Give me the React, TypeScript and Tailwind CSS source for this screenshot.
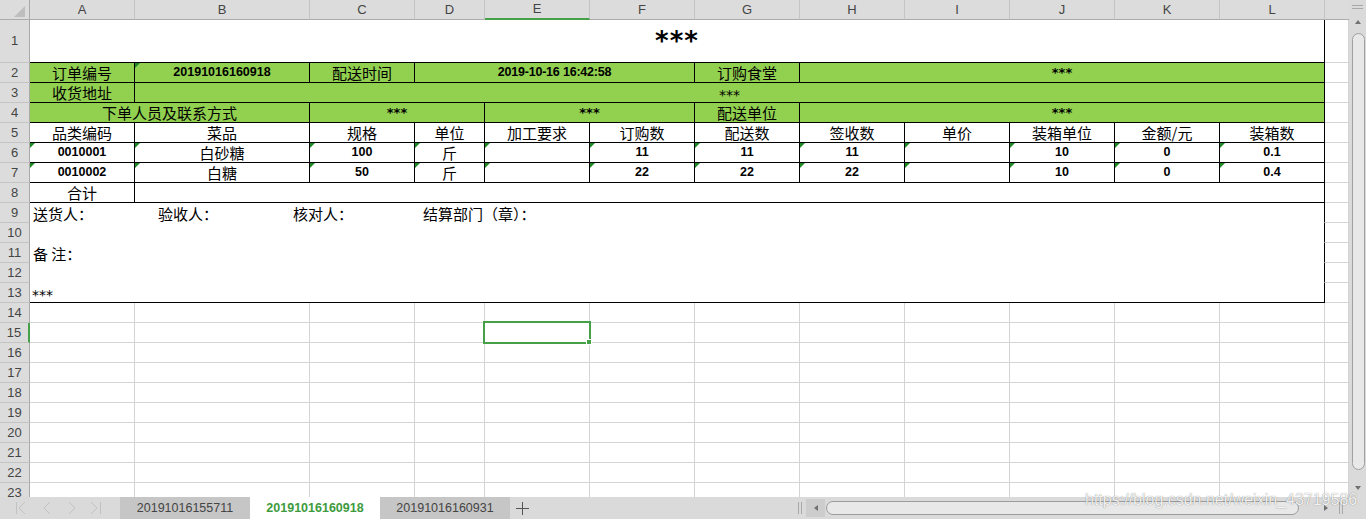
import React from 'react';

const COLS = ['A', 'B', 'C', 'D', 'E', 'F', 'G', 'H', 'I', 'J', 'K', 'L'];

const SPAN: Record<number, string> = {
  1: 'col-span-1',
  2: 'col-span-2',
  3: 'col-span-3',
  5: 'col-span-5',
  11: 'col-span-11',
  12: 'col-span-12',
};

const CJK = "font-['Noto_Sans_CJK_SC',sans-serif] text-[15px]";
const NUM = "font-['Liberation_Sans',Arial,sans-serif] font-bold text-[12.5px]";
const DATE = "font-['Liberation_Sans',Arial,sans-serif] font-bold text-[12.5px] tracking-[-0.2px]";
const STAR = "font-['DejaVu_Sans',sans-serif] font-bold text-[13px]";
const STAR_THIN = "font-['DejaVu_Sans',sans-serif] text-[14px] pt-[6px]";
const HEAD = "bg-[#dcdcdc] text-[#444] font-['Liberation_Sans',Arial,sans-serif] text-[13px] flex items-center justify-center";

type Cell = { t?: string; span?: number; f?: string; tri?: boolean };

const isNum = (s: string) => /^[\d.]+$/.test(s);
const auto = (t: string, tri = false): Cell => ({ t, f: isNum(t) ? NUM : CJK, tri });

const tableRows: { n: number; green: boolean; cells: Cell[] }[] = [
  {
    n: 2,
    green: true,
    cells: [
      { t: '订单编号' },
      { t: '20191016160918', f: NUM, tri: true },
      { t: '配送时间' },
      { t: '2019-10-16 16:42:58', f: DATE, span: 3 },
      { t: '订购食堂' },
      { t: '***', f: STAR, span: 5 },
    ],
  },
  {
    n: 3,
    green: true,
    cells: [{ t: '收货地址' }, { t: '***', f: STAR_THIN, span: 11 }],
  },
  {
    n: 4,
    green: true,
    cells: [
      { t: '下单人员及联系方式', span: 2 },
      { t: '***', f: STAR, span: 2 },
      { t: '***', f: STAR, span: 2 },
      { t: '配送单位' },
      { t: '***', f: STAR, span: 5 },
    ],
  },
  {
    n: 5,
    green: false,
    cells: ['品类编码', '菜品', '规格', '单位', '加工要求', '订购数', '配送数', '签收数', '单价', '装箱单位', '金额/元', '装箱数'].map((t) => auto(t)),
  },
  {
    n: 6,
    green: false,
    cells: ['0010001', '白砂糖', '100', '斤', '', '11', '11', '11', '', '10', '0', '0.1'].map((t) => auto(t, true)),
  },
  {
    n: 7,
    green: false,
    cells: ['0010002', '白糖', '50', '斤', '', '22', '22', '22', '', '10', '0', '0.4'].map((t) => auto(t, true)),
  },
  {
    n: 8,
    green: false,
    cells: [{ t: '合计' }, { span: 11 }],
  },
];

const Tri = () => (
  <span className="absolute left-0 top-0 w-0 h-0 border-t-[5px] border-r-[5px] border-t-[#1f8a24] border-r-transparent" />
);

const RowHead = ({ n }: { n: number }) =>
  n === 15 ? (
    <div className={`${HEAD} bg-[#c8c8c8] text-[#3d9b3d] border-b border-b-[#c4c4c4] border-r-2 border-r-[#45a047]`}>{n}</div>
  ) : (
    <div className={`${HEAD} border-b border-b-[#c4c4c4] border-r border-r-[#a9a9a9]`}>{n}</div>
  );

const Grid = () => <div className="border-r border-b border-[#d4d4d4] bg-white" />;

const Sheet = () => {
  const emptyRows = Array.from({ length: 10 }, (_, i) => i + 14);
  return (
    <div className="flex-1 overflow-hidden grid grid-cols-[30px_105px_175px_105px_70px_105px_105px_105px_105px_105px_105px_105px_105px_1fr] grid-rows-[20px_43px] auto-rows-[20px]">
      {/* column headers */}
      <div className={`${HEAD} border-r border-b border-r-[#a9a9a9] border-b-[#ababab] relative`}>
        <svg width="12" height="12" className="absolute left-[14px] top-[6px]">
          <polygon points="11,0 11,11 0,11" fill="#bdbdbd" />
        </svg>
      </div>
      {COLS.map((c) =>
        c === 'E' ? (
          <div key={c} className={`${HEAD} bg-[#c8c8c8] text-[#3d9b3d] border-r border-r-[#c4c4c4] border-b-2 border-b-[#45a047]`}>
            {c}
          </div>
        ) : (
          <div key={c} className={`${HEAD} border-r border-r-[#c4c4c4] border-b border-b-[#ababab]`}>
            {c}
          </div>
        )
      )}
      <div className={`${HEAD} border-b border-b-[#ababab]`} />

      {/* row 1 title */}
      <RowHead n={1} />
      <div className="col-span-12 bg-white border-r border-b border-black flex items-center justify-center leading-[42px] font-['DejaVu_Sans',sans-serif] font-bold text-[26px] tracking-[1px]">
        ***
      </div>
      <Grid />

      {tableRows.map((row) => (
        <React.Fragment key={row.n}>
          <RowHead n={row.n} />
          {row.cells.map((c, i) => (
            <div
              key={i}
              className={`${SPAN[c.span ?? 1]} relative h-full flex items-center justify-center leading-[19px] text-black border-r border-b border-black ${
                row.green ? 'bg-[#92d050]' : 'bg-white'
              } ${c.f ?? CJK}`}
            >
              {c.tri && <Tri />}
              {c.t}
            </div>
          ))}
          <Grid />
        </React.Fragment>
      ))}

      {/* rows 9 - 13 signature block */}
      <RowHead n={9} />
      <div className={`col-span-12 bg-white border-r border-black border-b border-b-white flex items-center pl-[3px] pt-[2px] leading-[18px] text-black ${CJK} text-[14px]`}>
        <span className="w-[125px]">送货人：</span>
        <span className="w-[135px]">验收人：</span>
        <span className="w-[130px]">核对人：</span>
        <span>结算部门（章）：</span>
      </div>
      <Grid />
      <RowHead n={10} />
      <div className="col-span-12 bg-white border-r border-black border-b border-b-white" />
      <Grid />
      <RowHead n={11} />
      <div className={`col-span-12 bg-white border-r border-black border-b border-b-white flex items-center pl-[3px] pt-[2px] leading-[18px] text-black ${CJK} text-[14px]`}>
        备 注：
      </div>
      <Grid />
      <RowHead n={12} />
      <div className="col-span-12 bg-white border-r border-black border-b border-b-white" />
      <Grid />
      <RowHead n={13} />
      <div className="col-span-12 bg-white border-r border-b border-black flex items-center pl-[2px] pt-[4px] leading-[18px] text-black font-['DejaVu_Sans',sans-serif] text-[14px]">
        ***
      </div>
      <Grid />

      {emptyRows.map((n) => (
        <React.Fragment key={n}>
          <RowHead n={n} />
          {COLS.map((c) =>
            n === 15 && c === 'E' ? (
              <div key={c} className="relative border-r border-b border-[#d4d4d4] bg-white">
                <div className="absolute -left-[2px] -top-[2px] w-[108px] h-[23px] border-[2.5px] border-[#45a047]" />
                <div className="absolute left-[101px] top-[16px] w-[6px] h-[6px] bg-[#45a047] border border-white" />
              </div>
            ) : (
              <Grid key={c} />
            )
          )}
          <Grid />
        </React.Fragment>
      ))}
    </div>
  );
};

const VScroll = () => (
  <div className="w-[17px] h-[497px] bg-[#dadada] flex flex-col">
    <div className="h-[12px] flex flex-col items-center justify-center gap-[2px] pt-[1px]">
      <div className="w-[11px] h-px bg-[#a8a8a8]" />
      <div className="w-[11px] h-px bg-[#a8a8a8]" />
    </div>
    <div className="h-[20px] flex items-center justify-center">
      <div className="w-0 h-0 border-x-[3px] border-x-transparent border-b-[4px] border-b-[#707070]" />
    </div>
    <div className="mt-[1px] h-[437px] pl-[3px] pr-[1px]">
      <div className="w-full h-full rounded-full border border-[#a0a0a0] bg-[#e8e8e8]" />
    </div>
    <div className="flex-1" />
    <div className="h-[19px] flex items-center justify-center">
      <div className="w-0 h-0 border-x-[3px] border-x-transparent border-t-[4px] border-t-[#707070]" />
    </div>
  </div>
);

const TabBar = () => (
  <div className="h-[22px] flex bg-[#dadada] font-['Liberation_Sans',Arial,sans-serif] text-[12.5px]">
    <svg width="120" height="22" className="shrink-0">
      <g stroke="#c2c2c2" strokeWidth="1" fill="none">
        <line x1="16.5" y1="5" x2="16.5" y2="17" />
        <polyline points="25,5 19,11 25,17" />
        <polyline points="50,5 44,11 50,17" />
        <polyline points="69,5 75,11 69,17" />
        <polyline points="91,5 97,11 91,17" />
        <line x1="100.5" y1="5" x2="100.5" y2="17" />
      </g>
    </svg>
    <div className="w-[130px] shrink-0 bg-[#c6c6c6] text-[#444] flex items-center justify-center">20191016155711</div>
    <div className="w-[130px] shrink-0 bg-white text-[#3d9b3d] font-bold flex items-center justify-center">20191016160918</div>
    <div className="w-[130px] shrink-0 bg-[#c6c6c6] text-[#444] flex items-center justify-center">20191016160931</div>
    <div className="w-[25px] shrink-0 flex items-center justify-center">
      <svg width="13" height="13">
        <g stroke="#555" strokeWidth="1">
          <line x1="6.5" y1="0" x2="6.5" y2="13" />
          <line x1="0" y1="6.5" x2="13" y2="6.5" />
        </g>
      </svg>
    </div>
    <div className="flex-1" />
    {/* horizontal scrollbar */}
    <div className="w-[12px] shrink-0 flex items-center justify-center gap-[2px]">
      <div className="w-px h-[12px] bg-[#a8a8a8]" />
      <div className="w-px h-[12px] bg-[#a8a8a8]" />
    </div>
    <div className="w-[19px] shrink-0 my-[2px] bg-[#cdcdcd] flex items-center justify-center">
      <div className="w-0 h-0 border-y-[3px] border-y-transparent border-r-[4px] border-r-[#707070]" />
    </div>
    <div className="w-[491px] shrink-0 pl-[1px] pt-[4px]">
      <div className="w-[473px] h-[14px] rounded-full border border-[#9c9c9c] bg-[#e8e8e8]" />
    </div>
    <div className="w-[19px] shrink-0 flex items-center justify-center">
      <div className="w-0 h-0 border-y-[3px] border-y-transparent border-l-[4px] border-l-[#707070]" />
    </div>
    <div className="w-[12px] shrink-0 flex items-center justify-center gap-[2px]">
      <div className="w-px h-[12px] bg-[#a8a8a8]" />
      <div className="w-px h-[12px] bg-[#a8a8a8]" />
    </div>
    <div className="w-[19px] shrink-0" />
  </div>
);

export default function App() {
  return (
    <div className="relative w-[1366px] h-[519px] overflow-hidden bg-white">
      <div className="flex h-[497px]">
        <Sheet />
        <VScroll />
      </div>
      <TabBar />
      <div className="absolute left-[1085px] top-[492px] leading-[16px] text-[16px] font-['Liberation_Sans',Arial,sans-serif] text-white/90 [text-shadow:0_0_1px_rgba(0,0,0,0.55)] whitespace-nowrap">
        https://blog.csdn.net/weixin_43719586
      </div>
    </div>
  );
}
